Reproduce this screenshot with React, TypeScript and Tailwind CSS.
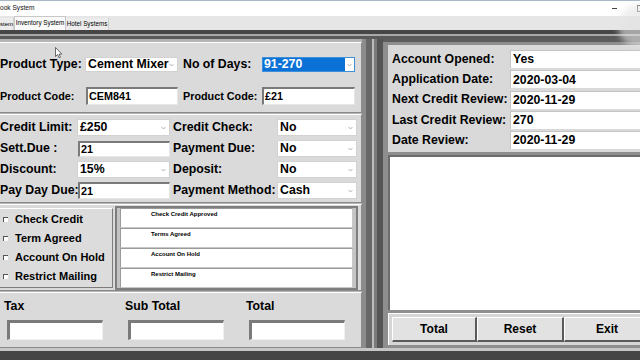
import React from "react";

const LBL = "text-[12.3px] font-bold text-black leading-none whitespace-nowrap";

function Chevron() {
  return (
    <svg width="5" height="4" viewBox="0 0 5 4" className="shrink-0">
      <path d="M0.6 1 L2.5 3 L4.4 1" fill="none" stroke="#a0a0a0" strokeWidth="0.8" />
    </svg>
  );
}

function Combo({ value, cls }: { value: string; cls: string }) {
  return (
    <div className={"flex items-center justify-between bg-white border border-[#d2d2d2] pl-[2px] pr-[3px] shrink-0 " + cls}>
      <span className={LBL}>{value}</span>
      <Chevron />
    </div>
  );
}

function TextBox({ value, cls, small }: { value: string; cls: string; small?: boolean }) {
  return (
    <div
      className={
        "flex items-center bg-white border-t-2 border-l-2 border-b border-r border-t-[#7a7a7a] border-l-[#7a7a7a] border-b-[#e6e6e6] border-r-[#e6e6e6] pl-[1px] shrink-0 " +
        cls
      }
    >
      <span className={small ? "text-[10.8px] font-bold leading-none" : LBL}>{value}</span>
    </div>
  );
}

function CheckRow({ label }: { label: string }) {
  return (
    <div className="h-[19px] flex items-center">
      <div className="w-[5px] h-[5px] bg-white border-t border-l border-[#555]" />
      <span className="ml-[7px] text-[11px] font-bold leading-none">{label}</span>
    </div>
  );
}

function InfoBox({ label }: { label: string }) {
  return (
    <div className="h-[20px] bg-white border-t border-l border-b border-r border-t-[#9a9a9a] border-l-[#9a9a9a] border-b-[#c8c8c8] border-r-[#c8c8c8] pl-[30px] pt-[2px]">
      <span className="block text-[6px] font-bold leading-none">{label}</span>
    </div>
  );
}

function InfoRow({ label, value }: { label: string; value: string }) {
  return (
    <div className="h-[18px] flex items-center shrink-0">
      <span className={"w-[118px] shrink-0 " + LBL}>{label}</span>
      <div className="h-[18px] w-[150px] shrink-0 flex items-center bg-white border-t border-l border-[#c4c4c4] pl-[2px]">
        <span className={LBL}>{value}</span>
      </div>
    </div>
  );
}

function Button({ label, cls }: { label: string; cls: string }) {
  return (
    <div
      className={
        "h-[25px] shrink-0 flex items-center justify-center bg-[#e2e2e2] border-t border-l border-b-2 border-r-2 border-t-white border-l-white border-b-[#5a5a5a] border-r-[#5a5a5a] " +
        cls
      }
    >
      <span className="text-[12px] font-bold leading-none">{label}</span>
    </div>
  );
}

export default function App() {
  return (
    <div className="w-[640px] h-[360px] overflow-hidden relative bg-[#5c5c5c] font-['Liberation_Sans',Arial,sans-serif] text-black">
      {/* title bar */}
      <div className="h-[16px] bg-white border-t border-[#a8b8c6] flex items-center relative">
        <span className="text-[6.6px] leading-none ml-0 text-[#111]">ook System</span>
        <div className="absolute left-[612px] top-[7px] w-[5px] h-[1px] bg-[#444]" />
        <div className="absolute left-[637px] top-[4px] w-[6px] h-[7px] border border-[#555]" />
      </div>
      {/* tabs */}
      <div className="h-[14px] bg-[#e6e6e6] flex items-end text-[6.3px] leading-none">
        <div className="h-[12px] w-[14px] flex items-center bg-[#ececec] border-r border-[#cfcfcf]">
          <span className="text-[6px]">stem</span>
        </div>
        <div className="h-[14px] w-[52px] flex items-center justify-center bg-[#fafafa] border-x border-t border-[#c8c8c8]">
          <span>Inventory System</span>
        </div>
        <div className="h-[12px] w-[43px] flex items-center justify-center bg-[#ececec] border-r border-[#cfcfcf]">
          <span>Hotel Systems</span>
        </div>
      </div>
      {/* top bands */}
      <div className="h-[4px] bg-[#464646]" />
      <div className="h-[2px] bg-[#a9a9a9]" />
      <div className="h-[3px] bg-[#5a5a5a]" />

      <div className="flex h-[309px]">
        {/* left column */}
        <div className="w-[366px] -ml-[4px] pt-[3px] bg-[#b4b4b4] flex flex-col gap-[1px] shrink-0">
          {/* panel 1 */}
          <div className="h-[71px] bg-[#dadada] border-t border-l border-b border-r border-t-white border-l-white border-b-[#8a8a8a] border-r-[#8a8a8a] pl-[3px]">
            <div className="flex items-center h-[15px] mt-[14px]">
              <span className={"w-[85px] shrink-0 " + LBL}>Product Type:</span>
              <Combo value="Cement Mixer" cls="w-[93px] h-[15px]" />
              <span className={"ml-[5px] w-[79px] shrink-0 " + LBL}>No of Days:</span>
              <div className="w-[93px] h-[15px] shrink-0 flex items-center bg-white border border-[#3c8fd8]">
                <div className="h-[13px] w-[82px] bg-[#0a72d6] flex items-center pl-[1px]">
                  <span className="text-[12.3px] font-bold leading-none text-white">91-270</span>
                </div>
                <div className="flex-1 flex justify-center">
                  <Chevron />
                </div>
              </div>
            </div>
            <div className="flex items-center h-[18px] mt-[15px]">
              <span className="w-[86px] shrink-0 text-[10.8px] font-bold leading-none">Product Code:</span>
              <TextBox value="CEM841" cls="w-[92px] h-[18px]" small />
              <span className="ml-[5px] w-[79px] shrink-0 text-[10.8px] font-bold leading-none">Product Code:</span>
              <TextBox value="£21" cls="w-[93px] h-[18px]" small />
            </div>
          </div>

          {/* panel 2 */}
          <div className="h-[89px] bg-[#dadada] border-t border-l border-b border-r border-t-white border-l-white border-b-[#8a8a8a] border-r-[#8a8a8a] pl-[3px] pt-[4px] flex flex-col gap-[4px]">
            <div className="flex items-center h-[17px]">
              <span className={"w-[77px] shrink-0 " + LBL}>Credit Limit:</span>
              <Combo value="£250" cls="w-[93px] h-[17px]" />
              <span className={"ml-[3px] w-[104px] shrink-0 " + LBL}>Credit Check:</span>
              <Combo value="No" cls="w-[80px] h-[17px]" />
            </div>
            <div className="flex items-center h-[17px]">
              <span className={"w-[78px] shrink-0 " + LBL}>Sett.Due :</span>
              <TextBox value="21" cls="w-[92px] h-[16px]" small />
              <span className={"ml-[3px] w-[104px] shrink-0 " + LBL}>Payment Due:</span>
              <Combo value="No" cls="w-[80px] h-[17px]" />
            </div>
            <div className="flex items-center h-[17px]">
              <span className={"w-[77px] shrink-0 " + LBL}>Discount:</span>
              <Combo value="15%" cls="w-[93px] h-[17px]" />
              <span className={"ml-[3px] w-[104px] shrink-0 " + LBL}>Deposit:</span>
              <Combo value="No" cls="w-[80px] h-[17px]" />
            </div>
            <div className="flex items-center h-[17px]">
              <span className={"w-[78px] shrink-0 " + LBL}>Pay Day Due:</span>
              <TextBox value="21" cls="w-[92px] h-[17px]" small />
              <span className={"ml-[3px] w-[104px] shrink-0 " + LBL}>Payment Method:</span>
              <Combo value="Cash" cls="w-[80px] h-[17px]" />
            </div>
          </div>

          {/* panel 3 */}
          <div className="h-[87px] bg-[#dadada] border-t border-l border-b border-r border-t-white border-l-white border-b-[#8a8a8a] border-r-[#8a8a8a] flex items-start">
            <div className="w-[116px] h-[80px] mt-[3px] shrink-0 bg-[#dcdcdc] border border-t-white border-l-white border-b-[#7c7c7c] border-r-[#7c7c7c] pl-[5px] pt-[1px]">
              <CheckRow label="Check Credit" />
              <CheckRow label="Term Agreed" />
              <CheckRow label="Account On Hold" />
              <CheckRow label="Restrict Mailing" />
            </div>
            <div className="ml-[2px] mt-[1px] w-[243px] h-[84px] shrink-0 border-2 border-[#7e7e7e] bg-[#c4c4c4] px-[3px]">
              <InfoBox label="Check Credit Approved" />
              <InfoBox label="Terms Agreed" />
              <InfoBox label="Account On Hold" />
              <InfoBox label="Restrict Mailing" />
            </div>
          </div>

          {/* panel 4 */}
          <div className="h-[56px] bg-[#dadada] border-t border-l border-b border-r border-t-white border-l-white border-b-[#8a8a8a] border-r-[#8a8a8a] pl-[7px] pt-[6px] flex overflow-hidden">
            {["Tax", "Sub Total", "Total"].map((t) => (
              <div key={t} className="w-[121px] shrink-0 flex flex-col">
                <div className="h-[14px] flex items-center">
                  <span className={LBL}>{t}</span>
                </div>
                <div className="ml-[3px] mt-[7px] w-[96px] h-[20px] bg-white border-t-[3px] border-l-[3px] border-b border-r border-t-[#7a7a7a] border-l-[#7a7a7a] border-b-[#f0f0f0] border-r-[#f0f0f0]" />
              </div>
            ))}
          </div>
        </div>

        {/* separator */}
        <div className="w-[4px] bg-[#8c8c8c] shrink-0" />
        <div className="w-[6px] bg-[#676767] shrink-0" />
        <div className="w-[2px] bg-[#bdbdbd] shrink-0" />
        <div className="w-[3px] bg-[#7a7a7a] shrink-0" />
        <div className="w-[6px] bg-[#555555] shrink-0" />

        {/* right column */}
        <div className="flex-1 flex flex-col overflow-hidden pt-[3px] bg-[#5c5c5c]">
          <div className="h-[113px] w-[270px] shrink-0 bg-[#d9d9d9] border-l-[5px] border-t-[3px] border-b-[3px] border-[#8e8e8e] pl-[4px] pt-[5px] flex flex-col gap-[2.25px]">
            <InfoRow label="Account Opened:" value="Yes" />
            <InfoRow label="Application Date:" value="2020-03-04" />
            <InfoRow label="Next Credit Review:" value="2020-11-29" />
            <InfoRow label="Last Credit Review:" value="270" />
            <InfoRow label="Date Review:" value="2020-11-29" />
          </div>
          <div className="h-[158px] w-[270px] shrink-0 bg-[#8e8e8e] pl-[3px] pb-[3px]">
            <div className="h-full ml-[2px] bg-white border-t-2 border-l-2 border-[#6c6c6c]" />
          </div>
          <div className="h-[35px] w-[270px] shrink-0 bg-[#8e8e8e] pl-[5px] pb-[3px]">
            <div className="h-full bg-[#d6d6d6] border-t border-l border-white pl-[3px] pt-[3px] flex">
              <Button label="Total" cls="w-[85px]" />
              <Button label="Reset" cls="w-[87px]" />
              <Button label="Exit" cls="w-[87px]" />
            </div>
          </div>
        </div>
      </div>

      {/* bottom bands */}
      <div className="h-[3px] bg-[#c6c6c6]" />
      <div className="h-[9px] bg-[#454545]" />

      {/* webcam-ish blur in the corner */}
      <div className="absolute left-[618px] top-[4px] w-[44px] h-[44px] rounded-full bg-[#e4e4e4] opacity-60 blur-[3px]" />

      {/* mouse cursor */}
      <svg className="absolute left-[55px] top-[47px]" width="8" height="12" viewBox="0 0 8 12">
        <path d="M0.5 0.5 L0.5 9.5 L2.6 7.6 L4 10.8 L5.4 10.2 L4 7.1 L6.8 7.1 Z" fill="white" stroke="#333" strokeWidth="0.7" />
      </svg>
    </div>
  );
}
